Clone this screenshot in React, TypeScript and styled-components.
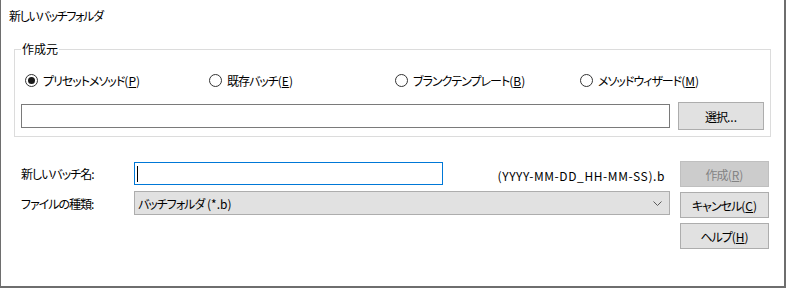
import styled, { createGlobalStyle } from "styled-components"

const GlobalStyle = createGlobalStyle`
  html, body {
    margin: 0;
    padding: 0;
    background: #ffffff;
  }
  body {
    font-family: "Noto Sans CJK JP", "Liberation Sans", sans-serif;
    font-size: 12px;
    color: #000;
    font-feature-settings: "palt";
    letter-spacing: -1px;
  }
`

type RadioOption = {
  label: string
  key: string
  checked?: boolean
}

const sources: RadioOption[] = [
  { label: "プリセットメソッド", key: "P", checked: true },
  { label: "既存バッチ", key: "E" },
  { label: "ブランクテンプレート", key: "B" },
  { label: "メソッドウィザード", key: "M" },
]

const Mnemonic = ({ text, k }: { text: string; k: string }) => (
  <span>
    {text}
    <Latin>
      (<u>{k}</u>)
    </Latin>
  </span>
)

const App = () => {
  return (
    <>
      <GlobalStyle />
      <Window>
        <Title>新しいバッチフォルダ</Title>
        <Group>
          <Legend>作成元</Legend>
          <RadioRow>
            {sources.map(s => (
              <RadioItem key={s.key}>
                <RadioCircle checked={s.checked ? 1 : 0} />
                <Mnemonic text={s.label} k={s.key} />
              </RadioItem>
            ))}
          </RadioRow>
          <PathRow>
            <TextBox />
            <Button width={86} height={28}>
              選択<Latin>...</Latin>
            </Button>
          </PathRow>
        </Group>
        <Bottom>
          <Form>
            <Label>新しいバッチ名:</Label>
            <NameRow>
              <TextBox focused={1} width={309}>
                <Caret />
              </TextBox>
              <Hint>(YYYY-MM-DD_HH-MM-SS).b</Hint>
            </NameRow>
            <Label shift={2}>ファイルの種類:</Label>
            <Combo>
              <span>
                バッチフォルダ<Latin>{"\u00a0(*.b)"}</Latin>
              </span>
              <svg width="9" height="5" viewBox="0 0 9 5">
                <polyline
                  points="0.5,0.5 4.5,4.5 8.5,0.5"
                  fill="none"
                  stroke="#5a5a5a"
                  strokeWidth="1"
                />
              </svg>
            </Combo>
          </Form>
          <Buttons>
            <Button disabled height={26}>
              <Mnemonic text="作成" k="R" />
            </Button>
            <Button height={26}>
              <Mnemonic text="キャンセル" k="C" />
            </Button>
            <Button height={26}>
              <Mnemonic text="ヘルプ" k="H" />
            </Button>
          </Buttons>
        </Bottom>
      </Window>
    </>
  )
}
export default App

const Latin = styled.span`
  font-family: "Noto Sans CJK JP", sans-serif;
  letter-spacing: 0;
`

const Window = styled.div`
  box-sizing: border-box;
  width: 786px;
  height: 288px;
  border-left: 1px solid #6e6e6e;
  border-right: 2px solid #6e6e6e;
  border-bottom: 2px solid #6e6e6e;
  background: #fff;
  display: flex;
  flex-direction: column;
`

const Title = styled.div`
  padding: 8px 0 0 8px;
  line-height: 16px;
  height: 16px;
  letter-spacing: -1.3px;
`

const Group = styled.fieldset`
  margin: 17px 13px 0 13px;
  padding: 0 6px 6px 6px;
  border: 1px solid #dcdcdc;
  min-width: 0;
`

const Legend = styled.legend`
  padding: 0 1px;
  line-height: 16px;
  letter-spacing: 0;
`

const RadioRow = styled.div`
  margin-top: 13px;
  height: 20px;
  padding-left: 4px;
  display: grid;
  grid-template-columns: 184px 186px 185px auto;
  align-items: center;
`

const RadioItem = styled.div`
  display: flex;
  align-items: center;
  gap: 5px;
  white-space: nowrap;
`

const RadioCircle = styled.span<{ checked: number }>`
  box-sizing: border-box;
  width: 13px;
  height: 13px;
  border: 1px solid #333;
  border-radius: 50%;
  display: flex;
  align-items: center;
  justify-content: center;
  &::after {
    content: "";
    width: 7px;
    height: 7px;
    border-radius: 50%;
    background: #1a1a1a;
    display: ${p => (p.checked ? "block" : "none")};
  }
`

const PathRow = styled.div`
  margin-top: 12px;
  height: 28px;
  display: flex;
  align-items: center;
  gap: 8px;
  & > div:first-child {
    flex: 1;
  }
`

const TextBox = styled.div<{ focused?: number; width?: number }>`
  box-sizing: border-box;
  height: 24px;
  width: ${p => (p.width ? `${p.width}px` : "auto")};
  border: 1px solid ${p => (p.focused ? "#0078d7" : "#7a7a7a")};
  background: #fff;
  display: flex;
  align-items: center;
  padding-left: 2px;
`

const Caret = styled.span`
  width: 1px;
  height: 16px;
  background: #000;
`

const Button = styled.button<{ width?: number; height: number }>`
  box-sizing: border-box;
  width: ${p => (p.width ? `${p.width}px` : "89px")};
  height: ${p => p.height}px;
  border: 1px solid ${p => (p.disabled ? "#bfbfbf" : "#adadad")};
  background: ${p => (p.disabled ? "#cccccc" : "#e1e1e1")};
  color: ${p => (p.disabled ? "#838383" : "#000")};
  font: inherit;
  letter-spacing: -1px;
  font-feature-settings: "palt";
  padding: 0;
  display: flex;
  align-items: center;
  justify-content: center;
  flex-shrink: 0;
`

const Bottom = styled.div`
  margin-top: 24px;
  padding-left: 20px;
  display: flex;
  align-items: flex-start;
  gap: 10px;
`

const Form = styled.div`
  padding-top: 1px;
  display: grid;
  grid-template-columns: 113px 536px;
  align-content: start;
  row-gap: 6px;
  align-items: center;
`

const Label = styled.div<{ shift?: number }>`
  line-height: 16px;
  padding-top: ${p => p.shift ?? 0}px;
  white-space: nowrap;
`

const NameRow = styled.div`
  display: flex;
  align-items: center;
  height: 23px;
  & > div:first-child {
    height: 23px;
  }
`

const Hint = styled(Latin)`
  flex: 1;
  text-align: right;
  padding: 3px 5px 0 0;
  white-space: nowrap;
  letter-spacing: 0.6px;
`

const Combo = styled.div`
  box-sizing: border-box;
  height: 24px;
  border: 1px solid #adadad;
  background: #e1e1e1;
  display: flex;
  align-items: center;
  justify-content: space-between;
  padding: 0 7px 0 3px;
`

const Buttons = styled.div`
  display: flex;
  flex-direction: column;
  gap: 5px;
`
